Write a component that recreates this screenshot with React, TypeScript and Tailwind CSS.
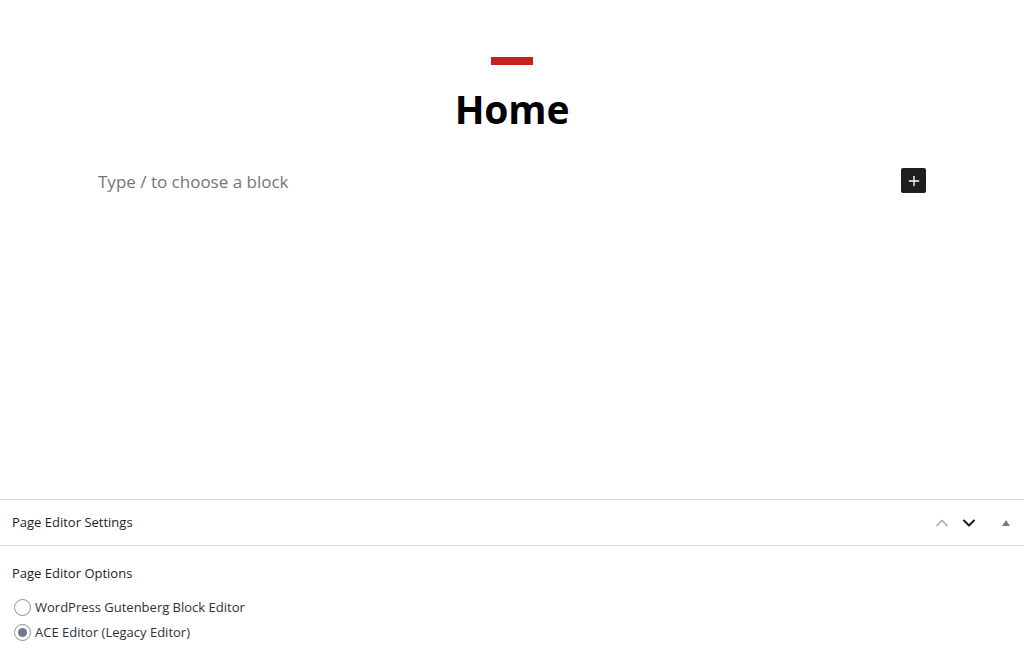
import { ChevronUp, ChevronDown, Plus } from 'lucide-react';

const App = () => {
  return (
    <div className="h-screen flex flex-col bg-white text-[#1e1e1e] font-['Open_Sans','Noto_Sans',sans-serif]">
      {/* Editor canvas */}
      <div className="flex-1 flex flex-col items-center pt-[57px]">
        <div className="w-[42px] h-[8px] bg-[#c8201e]" />
        <h1 className="mt-[22px] text-[39px] leading-[44px] font-bold tracking-[-0.2px] text-black">Home</h1>
        <div className="w-[828px] mt-[37px] flex items-center justify-between">
          <span className="text-[17px] text-[#757575] relative top-[1px]">Type / to choose a block</span>
          <button className="w-[25px] h-[25px] rounded-[2px] bg-[#1e1e1e] flex items-center justify-center text-white">
            <Plus className="w-[16px] h-[16px]" strokeWidth={2} />
          </button>
        </div>
      </div>

      {/* Meta box */}
      <div className="h-[153px] border-t border-[#dcdcde] shrink-0">
        <div className="h-[46px] border-b border-[#dcdcde] flex items-center justify-between pl-3 pr-[13px]">
          <span className="text-[13px]">Page Editor Settings</span>
          <div className="flex items-center">
            <ChevronUp className="w-[20px] h-[20px] text-[#a7aaad]" strokeWidth={2} />
            <ChevronDown className="w-[20px] h-[20px] ml-[7px] text-[#1e1e1e]" strokeWidth={2.5} />
            <svg className="ml-[22px]" width="10" height="8" viewBox="0 0 10 8">
              <path d="M5 1 L9 7 L1 7 Z" fill="#787c82" />
            </svg>
          </div>
        </div>
        <div className="px-3 pt-[18px]">
          <div className="text-[13px]">Page Editor Options</div>
          <div className="mt-[14px] flex flex-col gap-[6px]">
            <label className="flex items-center gap-[4px] text-[13px] text-[#2c3338]">
              <span className="w-[17px] h-[17px] ml-[2px] rounded-full border border-[#8c8f94] bg-white" />
              WordPress Gutenberg Block Editor
            </label>
            <label className="flex items-center gap-[4px] text-[13px] text-[#2c3338]">
              <span className="w-[17px] h-[17px] ml-[2px] rounded-full border border-[#8c8f94] bg-white flex items-center justify-center">
                <span className="w-[9px] h-[9px] rounded-full bg-[#6b7a8c]" />
              </span>
              ACE Editor (Legacy Editor)
            </label>
          </div>
        </div>
      </div>
    </div>
  );
};

export default App;
